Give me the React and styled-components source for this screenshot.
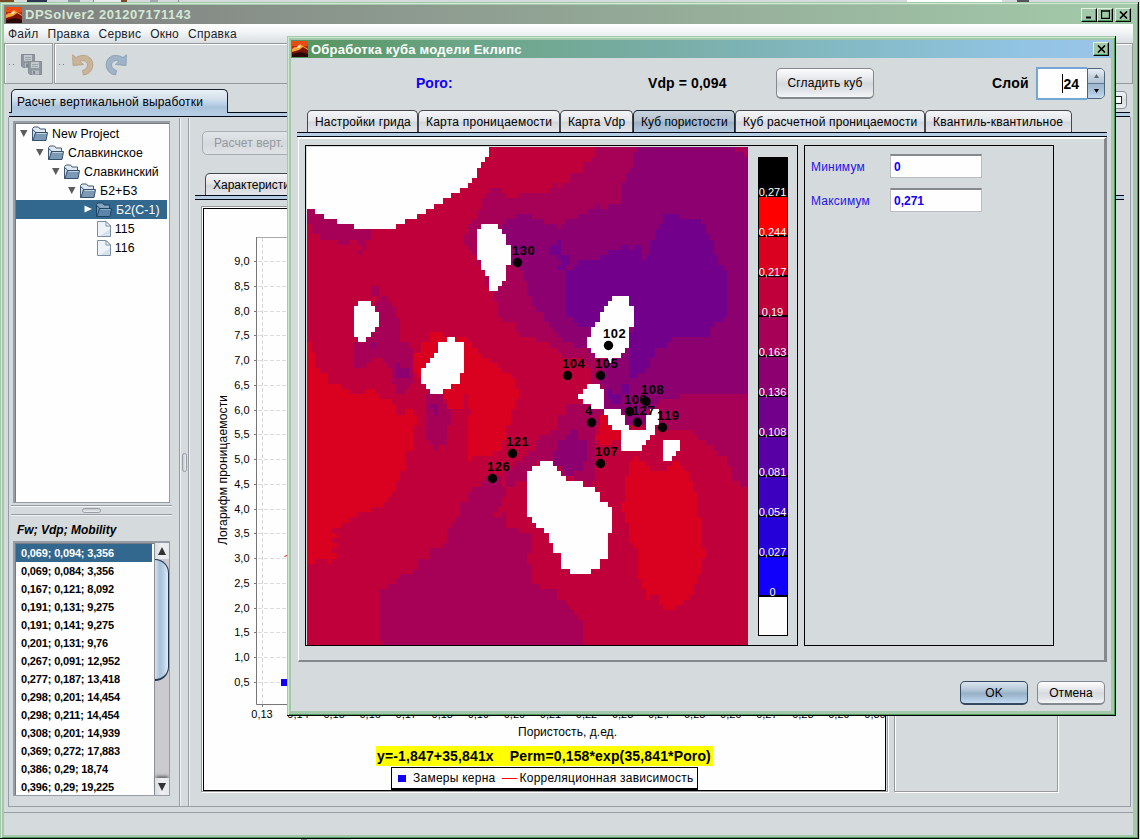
import React from "react";
import styled, { createGlobalStyle, css } from "styled-components";

const Global = createGlobalStyle`
  * { box-sizing: border-box; }
  body { margin: 0; overflow: hidden; background: #d5dadd; }
  #root { font: 12px "Liberation Sans", Arial, sans-serif; color: #000; white-space: pre; }
  svg { display: block; flex: none; }
`;

/* ---------- shared frame parts ---------- */
const Desktop = styled.div`
  position: relative; width: 1140px; height: 840px; padding-top: 2px; overflow: hidden;
  background:
    linear-gradient(90deg, #7a4a22 0 14px, #d5dadd 14px 27px, #2c3550 27px 47px, #d5dadd 47px 68px, #8d959d 68px 80px,
      #d5dadd 80px 93px, #888 93px 94px, #e8eaec 94px 121px, #7a4a22 121px 127px, #d5dadd 127px 150px, #a4a9b4 150px 158px,
      #d5dadd 158px 178px, #888 178px 179px, #d5dadd 179px 907px, #fff 907px 1002px, #d5dadd 1002px 1017px, #555 1017px 1029px, #d5dadd 1029px) 0 0 / 100% 2px no-repeat,
    linear-gradient(90deg, #fff 0 301px, #888 301px 307px, #d5dadd 307px 351px, #fff 351px) 0 839px / 100% 1px no-repeat,
    #d5dadd;
`;
const frame = css`
  background: #a4c8aa;
  border-right: 1px solid #000;
  border-bottom: 1px solid #000;
  display: flex; flex-direction: column;
`;
const MainWindow = styled.div`
  ${frame}
  width: 1139px; height: 837px;
  padding: 3px 5px 3px 4px;
  box-shadow: inset 1px 1px 0 #a4c8aa, inset 2px 2px 0 #d2ead4, inset -1px -1px 0 #4f9960;
`;
const DialogWindow = styled.div`
  ${frame}
  position: absolute; left: 287px; top: 36px; width: 829px; height: 680px; z-index: 5;
  padding: 4px;
  box-shadow: inset 1px 1px 0 #a4c8aa, inset 2px 2px 0 #cfe8d2, inset -1px -1px 0 #4f9960;
`;
const TitleBar = styled.div`
  display: flex; align-items: center; height: ${(p) => p.$h}px; flex: none;
  font-weight: bold; font-size: 13px; color: ${(p) => p.$fg};
  background: ${(p) => p.$bg};
  padding: 0 2px 0 ${(p) => p.$pl}px;
  b { flex: 1; padding-left: 3px; letter-spacing: ${(p) => p.$ls}px; }
`;
const CaptionButton = styled.div`
  width: 16px; height: 14px; background: #a4c8aa; margin-left: ${(p) => p.$gap || 0}px;
  border: 1px solid; border-color: #e0f2e2 #000 #000 #e0f2e2; box-shadow: inset -1px -1px 0 #4f9960;
  display: flex; align-items: center; justify-content: center;
`;
const CloseGlyph = () => (
  <svg width="9" height="8" viewBox="0 0 9 8"><path d="M1 .5L8 7.5M8 .5L1 7.5" stroke="#000" strokeWidth="1.6" /></svg>
);
const AppLogo = () => (
  <svg width="16" height="16" viewBox="0 0 16 16">
    <rect width="16" height="16" fill="#c92a08" />
    <rect width="16" height="5" fill="#e84a10" />
    <path d="M0 8L3 6L5 7L8 3L11 5L16 8V10L0 11Z" fill="#f9a33a" />
    <path d="M4 7L7 4L9 5L7 7Z" fill="#ffe9a0" />
    <path d="M0 11L7 9L11 6L16 9V16H0Z" fill="#7c1407" />
    <path d="M0 13L9 11L16 13V16H0Z" fill="#2a0806" />
  </svg>
);
const Client = styled.div`
  flex: 1; min-height: 0; background: #d5dadd; display: flex; flex-direction: column;
`;

/* ---------- menu and tool bar ---------- */
const MenuBar = styled.div`
  height: 19px; display: flex; gap: 9px; padding: 0 4px; align-items: center; flex: none;
  background: linear-gradient(#fff, #f1f4f5 45%, #d9dee1); color: #20242a; letter-spacing: .25px;
`;
const ToolBar = styled.div` display: flex; height: 41px; gap: 1px; flex: none; `;
const ToolGroup = styled.div`
  width: ${(p) => (p.$w ? p.$w + "px" : "auto")}; flex: ${(p) => (p.$w ? "none" : 1)};
  border: 1px solid #98999d; box-shadow: inset 1px 1px 0 #fff;
  display: flex; align-items: center; padding-left: 4px; padding-top: 2px;
`;
const Grip = styled.span`
  width: 6px; height: 1px; margin-right: ${(p) => p.$gap}px;
  background: linear-gradient(90deg, #777 0 1px, transparent 1px 4px, #777 4px 5px, transparent 5px);
`;
const ToolIcons = styled.div` display: flex; gap: 11px; `;
const SaveAllIcon = () => (
  <svg width="23" height="22" viewBox="0 0 23 22">
    {[[1, 0], [8, 7]].map(([x, y]) => (
      <g key={x} transform={`translate(${x} ${y})`}>
        <path d="M.5 .5H13.5V13.5H2L.5 12Z" fill="#8f979f" stroke="#838b94" />
        <rect x="3" y="1" width="8" height="6" fill="#c3cacf" />
        <path d="M4 3.5H10M4 5.5H10" stroke="#9da4ab" />
        <rect x="4" y="9.500" width="7" height="4" fill="#b6bdc3" />
        <rect x="5" y="10" width="2" height="3" fill="#7e868e" />
      </g>
    ))}
  </svg>
);
const TurnIcon = ({ flip, fill, stroke }) => (
  <svg width="22" height="22" viewBox="0 0 22 22">
    <g transform={flip ? "translate(22 0) scale(-1 1)" : undefined}>
      <path d="M.7 .8L4 3.600C9 .5 15 .8 18 4C23 9 21 17 15 20L11.500 21L10.500 16.500C15 15.500 17.500 10 13.500 7.500C11.500 6 9.500 6.500 8 7.500L11.500 10.500L1 11.500Z"
        fill={fill} stroke={stroke} />
    </g>
  </svg>
);

/* ---------- tabs ---------- */
const TabRow = styled.div`
  display: flex; height: ${(p) => p.$h}px; padding-left: ${(p) => p.$pl}px; position: relative; z-index: 1; flex: none;
`;
const Tab = styled.div`
  width: ${(p) => p.$w}px; height: 100%; flex: none; padding-left: ${(p) => p.$pad || 7}px; line-height: ${(p) => p.$lh || 22}px;
  border: 1px solid ${(p) => (p.$tone === "plain" ? "#43474e" : "#16202e")}; border-bottom: 0;
  border-radius: 5px 5px 0 0; letter-spacing: ${(p) => p.$ls || 0}px; overflow: hidden;
  margin-bottom: ${(p) => (p.$tone === "plain" ? 0 : -1)}px;
  background: ${(p) =>
    p.$tone === "active"
      ? "linear-gradient(#eaf0f6, #d3e0ed 40%, #c5d8ec 50%, #a9c3dc 75%, #b5cde2)"
      : p.$tone === "pressed"
      ? "linear-gradient(#cad4de, #b4c2d0 48%, #9db1c4 52%, #b2c8de)"
      : "linear-gradient(#f4f5f7, #e3e5e9 48%, #d3d6db 52%, #e4e6ea)"};
`;
const TabHolder = styled.div` padding-top: 5px; display: flex; margin-bottom: -1px; height: 29px; `;
const MaxSlot = styled.div` flex: 1; display: flex; padding-top: 5px; `;
const TabStrip = styled.div`
  height: 5px; flex: none; background: #b5cde2; border-top: 1px solid #000818; border-bottom: 1px solid #000818;
  margin: 0 ${(p) => p.$mr || 0}px 0 ${(p) => p.$ml || 0}px;
`;
const MaxButton = styled.div`
  margin: 2px 6px 0 auto; width: 20px; height: 18px; border: 1px solid #8b9098; border-radius: 4px;
  background: linear-gradient(#f2f3f5, #d9dce0 50%, #eceef0); display: flex; align-items: center; justify-content: center;
  i { width: 9px; height: 8px; border: 1px solid #222; background: #fff; }
`;

/* ---------- main layout ---------- */
const Workspace = styled.div`
  margin: 0 2px 0 4px; height: 690px; display: flex; border: 1px solid #989ca6; border-top: 0; flex: none;
`;
const LeftPane = styled.div` width: 170px; padding: 4px 0 0 4px; display: flex; flex-direction: column; flex: none; `;
const VSplit = styled.div`
  width: 10px; margin-top: 1px; border: solid #989ca6; border-width: 0 1px; box-shadow: inset 1px 0 0 #eef0f1, 1px 0 0 #eef0f1;
  display: flex; align-items: center; justify-content: center; flex: none;
`;
const HSplit = styled.div`
  height: 10px; width: 161px; margin: 2px 0 0 -2px; border: solid #989ca6; border-width: 1px 0; flex: none;
  box-shadow: inset 0 1px 0 #f4f5f6, 0 1px 0 #eef0f1; display: flex; align-items: center; justify-content: center;
`;
const Knob = styled.i`
  width: ${(p) => (p.$v ? 5 : 19)}px; height: ${(p) => (p.$v ? 19 : 5)}px; border: 1px solid #9a9da6; border-radius: 3px;
  background: linear-gradient(${(p) => (p.$v ? "90deg" : "180deg")}, #c4c6cc, #eceef1);
`;
const Sunken = styled.div`
  width: 157px; height: ${(p) => p.$h}px; border: 1px solid #989ca6; border-width: 2px 1px 1px 2px; background: #fefefe; flex: none;
  box-shadow: inset 1px 1px 0 #777b82;
`;
const TreeBox = styled(Sunken)` padding: 1px 1px 0 1px; `;
const TreeRow = styled.div`
  height: 19px; display: flex; align-items: center; padding-left: ${(p) => p.$d * 16 + 4}px; font-size: 12.3px;
  margin-right: 1px; letter-spacing: .1px; line-height: 19px;
  ${(p) => p.$on && "background: #33688e; color: #fff;"}
  svg { margin-right: 4px; }
  span { padding-top: 2px; }
`;
const Caret = ({ open }) => (
  <svg width="8" height="9" viewBox="0 0 8 9">
    <path d={open ? "M0 1H7.500L3.750 8Z" : "M.5 .5V7.500L8 4Z"} fill={open ? "#5c5c5c" : "#fff"} />
  </svg>
);
const Folder = ({ dark }) => (
  <svg width="16" height="16" viewBox="0 0 16 16">
    <path d="M.5 14.500V2.500L2 1H6.500L8 3H13.500V7" fill={dark ? "#86a5c0" : "#e0e9f1"} stroke={dark ? "#1c4566" : "#3f5a74"} />
    <path d="M.5 14.500V3.500L3.500 6V14.500Z" fill={dark ? "#6f93b3" : "#cddae6"} stroke={dark ? "#1c4566" : "#3f5a74"} />
    <path d="M1 14.500L3.500 6.500H15.500L14 14.500Z" fill={dark ? "#5c85a9" : "#7c9ab5"} stroke={dark ? "#1c4566" : "#34506b"} />
    <path d="M4.500 7.500H14.500" stroke={dark ? "#86a7c3" : "#c2d2e0"} />
  </svg>
);
const FileIcon = () => (
  <svg width="14" height="16" viewBox="0 0 14 16">
    <path d="M.5 .5H9L13.500 5V15.500H.5Z" fill="#edf3f9" stroke="#7b8da3" />
    <path d="M9 .5V5H13.500Z" fill="#fff" stroke="#7b8da3" />
    <path d="M3 15L13 8V15Z" fill="#d5e1ed" />
  </svg>
);
const Caption = styled.div`
  height: 26px; padding: 7px 0 0 4px; font: italic bold 12px/16px "Liberation Sans", Arial, sans-serif; flex: none;
`;
const ListBox = styled(Sunken)` display: flex; overflow: hidden; `;
const ListRows = styled.div` width: 139px; padding: 1px 2px 0 1px; font-weight: bold; font-size: 11px; letter-spacing: -.16px; `;
const ListRow = styled.div`
  height: 18px; line-height: 18px; padding-left: 5px; overflow: hidden;
  ${(p) => p.$on && "background: #33688e; color: #fff;"}
`;
const ScrollBar = styled.div`
  width: 15px; display: flex; flex-direction: column; border-left: 1px solid #8b9098; background: #cbcbcf;
`;
const ScrollCap = styled.div`
  height: ${(p) => p.$h}px; background: linear-gradient(90deg, #d9dde1, #eef0f2 50%, #e4e8ec);
  display: flex; align-items: center; justify-content: center; flex: none;
  ${(p) => p.$end && "box-shadow: 0 -3px 3px -1px #666;"}
`;
const Thumb = styled.div`
  height: 122px; border: 1px solid #22354d; border-width: 1px 1px 2px 0; border-radius: 0 14px 14px 0; flex: none; margin-bottom: auto;
  background: linear-gradient(90deg, #d4e2f0, #a9c1d9 35%, #b4cbe0 60%, #dcebf8);
`;

const RightPane = styled.div` flex: 1; display: flex; flex-direction: column; padding: 14px 6px 0 6px; min-width: 0; `;
const buttonLook = {
  plain: ["#85898f", "linear-gradient(#fdfdfd, #e9ebee 30%, #d6dadf 52%, #dfe2e6 75%, #f4f6f8)"],
  primary: ["#34495f", "linear-gradient(#dbe5ef, #b6c9da 35%, #98b1c7 55%, #a8c2da 75%, #c3dcf2)"],
  off: ["#a9adb3", "linear-gradient(#e2e5e8, #d5d9dd 55%, #dfe2e5)"],
};
const Button = styled.div`
  width: ${(p) => p.$w}px; height: ${(p) => p.$h}px; border: 1px solid ${(p) => buttonLook[p.$kind || "plain"][0]};
  border-bottom-width: ${(p) => (p.$kind === "off" ? 1 : 2)}px;
  border-radius: 5px; background: ${(p) => buttonLook[p.$kind || "plain"][1]}; letter-spacing: .1px;
  display: flex; align-items: center; justify-content: center; flex: none;
  ${(p) => p.$kind === "off" && "color: #94989d; justify-content: flex-start; padding-left: 11px; margin: 0 0 18px 7px;"}
`;
const PanelRow = styled.div` display: flex; gap: 6px; padding: 6px 0 0 6px; `;
const EtchedPanel = styled.div`
  width: ${(p) => p.$w}px; height: 586px; border: 1px solid #98999d; flex: none;
  box-shadow: 1px 1px 0 #fff, inset 1px 1px 0 #fff; padding: ${(p) => p.$pad || "0"};
`;
const ChartCard = styled.div`
  height: 583px; border: 1px solid #000; background: #fefefe; display: flex; flex-direction: column; align-items: center;
`;
const Formula = styled.div`
  width: 337px; height: 20px; background: #ff0; font: bold 14px/21px "Liberation Sans", Arial, sans-serif; text-align: center;
  margin-right: 1px; letter-spacing: .14px;
`;
const ChartLegend = styled.div`
  width: 307px; height: 24px; margin-top: 1px; border: 1px solid #000; border-bottom-width: 2px; display: flex; align-items: center; padding-left: 6px;
  letter-spacing: .25px;
  i { width: 8px; height: 7px; background: #1200f5; margin-right: 7px; }
  u { width: 15px; height: 1px; background: #f00; margin: 0 3px 0 6px; }
`;
const StatusBar = styled.div` margin-top: 5px; border-top: 1px solid #989ca6; flex: 1; `;

const yTicks = Array.from({ length: 18 }, (_, i) => ((18 - i) / 2).toFixed(1).replace(".", ","));
const xTicks = Array.from({ length: 18 }, (_, i) => "0," + (13 + i));

const Plot = () => (
  <svg width="681" height="537" viewBox="204 209 681 537" fontFamily="Liberation Sans, Arial, sans-serif">
    <path d="M256.500 237.500H880" stroke="#aaa" />
    <path d="M262.500 238V704" stroke="#d6d6d6" strokeDasharray="4 2" />
    {yTicks.map((t, i) => {
      const y = Math.round(261 + i * 24.76) + 0.5;
      return (
        <g key={t}>
          <path d={`M258 ${y}H300`} stroke="#dcdcdc" strokeDasharray="4 2" />
          <path d={`M254 ${y}H257`} stroke="#777" />
          <text x="249.500" y={y + 3.5} textAnchor="end" fontSize="11">{t}</text>
        </g>
      );
    })}
    <path d="M256.500 237V704.500H880M262.500 704V707" stroke="#777" fill="none" />
    <path d="M284.500 556.500L287 555.500" stroke="#f00" />
    <rect x="281" y="679" width="7" height="7" fill="#1200f5" />
    {xTicks.map((t, i) => (
      <text key={t} x={262 + i * 36.06} y="718" textAnchor="middle" fontSize="11">{t}</text>
    ))}
    <text transform="translate(227 545) rotate(-90)" fontSize="12" textLength="150">Логарифм проницаемости</text>
    <text x="518" y="736" fontSize="12" textLength="99">Пористость, д.ед.</text>
  </svg>
);

/* ---------- porosity map ---------- */
const COLORS = { r: "#d90020", c: "#bf003a", m: "#a60057", p: "#8c0070", v: "#73008b", w: "#fefefe" };
// Zones are listed from back to front: [colour, x shift, y shift, outline], in thirds of a pixel.
const ZONES = [
  ["m", 0, 0, "21,203 60,219 110,240 155,255 207,270 207,300 195,312 195,325 183,328 183,345 168,345 168,328 183,322 180,310 168,303 145,297 145,310 120,310 108,300 95,310 93,297 57,295 45,280 33,278 33,252 21,250"],
  ["m", 0, 0, "207,452 220,435 243,435 243,465 257,470 257,482 283,500 283,527 295,530 306,545 306,605 333,620 333,725 320,740 318,757 295,757 283,740 270,725 270,692 257,680 257,665 243,653 218,653 218,665 195,668 195,682 170,682 156,665 156,600 200,600 232,560 232,512 218,495 232,482 232,468 207,465"],
  ["m", 0, 0, "882,21 882,50 857,68 845,95 815,100 808,125 795,130 780,143 765,130 755,143 745,158 675,160 672,172 658,160 658,172 630,172 607,160 594,143 570,145 570,158 556,160 543,185 543,205 530,220 519,250 507,262 507,283 497,285 497,310 507,312 507,325 519,330 531,360 543,390 556,405 556,435 570,450 583,455 583,485 594,495 594,515 607,540 645,545 645,575 658,590 705,590 705,603 742,605 742,620 765,622 772,640 790,650 845,655 858,680 868,685 868,730 855,735 845,792 795,800 795,815 770,825 770,870 732,885 720,900 705,915 705,927 682,930 672,950 648,965 645,975 632,990 618,1005 618,1035 645,1035 648,1025 685,1020 685,995 720,960 770,960 790,1010 845,1023 870,1035 882,1015 882,930 892,870 892,850 907,820 960,830 960,860 1050,860 1075,870 1180,870 1180,885 1205,900 1230,915 1255,930 1255,945 1280,948 1280,980 1295,985 1295,1020 1315,1025 1330,1038 1344,1053 1344,21"],
  ["m", 0, 0, "560,1010 605,1010 607,1035 618,1040 618,1065 595,1070 605,1085 595,1110 583,1120 595,1140 605,1115 618,1115 618,1160 645,1162 658,1175 690,1178 694,1235 682,1240 682,1265 694,1270 694,1318 720,1345 735,1360 740,1348 765,1350 770,1375 792,1378 792,1392 820,1410 830,1435 842,1440 842,1518 258,1518 243,1500 243,1435 232,1430 232,1380 243,1375 243,1350 258,1345 283,1330 283,1317 306,1313 306,1300 333,1297 333,1285 345,1283 357,1268 357,1255 382,1253 395,1238 395,1223 420,1220 432,1205 445,1190 445,1162 457,1145 470,1130 480,1125 480,1085 507,1080 507,1055 520,1050 520,1037 545,1035"],
  ["p", 0, 0, "1017,21 1005,38 1005,65 993,80 982,95 970,98 970,120 960,158 958,185 930,190 930,203 895,205 890,190 882,203 857,207 855,220 832,222 832,235 793,238 793,250 780,255 778,265 768,265 765,252 732,250 732,238 695,235 693,222 645,220 645,235 618,237 618,250 605,252 605,270 618,285 620,315 630,320 630,375 655,380 672,390 672,420 682,422 682,465 695,470 695,485 708,500 720,515 732,517 732,530 745,545 755,560 768,575 780,590 795,605 820,605 820,620 855,620 880,650 925,660 910,690 925,700 905,720 907,805 965,810 980,850 1045,850 1045,810 1070,795 1092,775 1145,775 1145,760 1344,758 1344,52 1330,50 1330,38 1305,35 1305,21"],
  ["p", 0, 0, "283,670 306,670 306,683 332,685 332,700 318,712 295,712 283,695"],
  ["p", 0, 0, "207,605 219,605 219,622 207,622"],
  ["p", 660, 720, "148,148 172,148 172,165 195,185 195,240 185,243 185,270 160,273 158,287 135,287 130,273 105,255 97,240 97,228 108,215 108,180 133,178 135,165 148,163"],
  ["c", 660, 0, "195,683 208,683 208,713 195,713"],
  ["v", 660, 0, "432,220 483,220 483,237 532,238 545,250 558,268 570,297 582,300 582,345 595,348 595,375 608,378 608,390 622,392 622,525 608,530 595,548 570,562 570,577 558,590 460,592 460,605 445,608 445,620 408,622 408,652 395,655 395,668 383,685 370,697 357,700 357,713 322,713 322,600 345,560 220,560 172,558 172,545 145,530 133,525 133,392 158,390 158,375 172,373 172,360 235,360 235,347 258,345 258,330 298,328 298,313 333,313 333,327 345,327 345,312 370,312 370,360 383,360 383,347 397,345 397,298 408,297 408,268 420,265 420,250 432,248"],
  ["v", 660, 0, "108,298 120,298 120,343 147,347 147,375 133,388 108,388 108,375 120,372 120,360 97,345 85,343 85,315 108,312"],
  ["v", 660, 720, "258,40 270,25 283,25 283,38 298,38 298,10 322,10 322,38 308,40 308,70 283,70 283,55 258,55"],
  ["v", 0, 0, "655,312 672,312 672,325 655,325"],
  ["r", 0, 0, "21,605 33,605 33,635 45,637 45,680 57,685 57,698 82,700 82,730 120,732 120,745 145,745 145,758 195,758 195,745 220,745 220,758 243,760 243,775 270,778 270,790 283,792 283,808 295,820 318,820 318,808 345,810 345,822 357,825 357,850 345,855 345,885 333,888 333,927 318,930 318,958 308,960 308,990 295,995 295,1020 283,1025 283,1050 270,1055 270,1067 258,1070 258,1082 245,1085 245,1100 208,1102 208,1115 168,1117 168,1130 145,1132 145,1145 120,1148 120,1160 93,1163 93,1175 108,1177 108,1190 93,1193 93,1207 108,1210 108,1223 93,1225 93,1240 108,1240 108,1253 93,1255 93,1268 82,1268 82,1255 45,1255 45,1268 21,1268"],
  ["r", 0, 0, "395,577 432,577 432,590 505,593 507,605 520,608 520,622 543,638 543,650 570,653 570,665 607,682 607,697 632,700 632,712 645,715 645,740 668,745 657,760 657,770 645,788 645,805 632,822 632,850 618,855 618,900 607,903 607,927 583,930 583,943 520,945 520,958 507,958 507,822 520,815 507,805 507,760 495,757 495,792 482,805 445,805 432,770 432,740 382,725 345,705 345,640 357,635 370,622 370,608 382,605 395,592"],
  ["m", 0, 720, "382,38 420,20 420,45 432,50 432,65 445,90 457,105 457,130 443,135 443,192 420,195 407,208 395,192 382,180"],
  ["p", 0, 720, "395,70 420,70 420,102 405,102 405,87 395,87"],
  ["r", 660, 720, "322,240 345,240 345,228 357,228 357,240 383,240 383,255 397,258 397,272 445,272 445,258 457,255 457,240 483,242 483,257 497,260 497,273 508,275 508,300 520,303 520,330 532,335 532,410 545,415 545,500 557,505 557,530 545,535 545,575 532,580 532,605 520,610 520,640 497,658 497,670 472,672 472,687 432,687 432,672 420,670 420,643 397,643 397,655 383,655 383,628 370,625 370,600 357,598 357,505 345,500 345,490 333,487 333,460 322,455 322,425 310,420 310,392 298,392 298,365 310,363 310,290 322,285"],
  ["r", 660, 720, "235,105 258,105 270,130 283,145 300,148 300,175 280,180 270,195 245,195 245,180 232,180"],
  ["w", 0, 0, "0,0 570,0 570,51 555,51 555,66 543,66 543,81 531,81 531,111 519,111 519,129 507,129 507,144 480,144 480,159 456,159 456,174 432,174 432,189 405,189 405,204 381,204 381,219 357,219 357,237 318,237 318,251 282,251 282,267 156,267 156,251 108,251 108,237 69,237 69,219 45,219 45,204 0,204"],
  ["w", 0, 0, "543,252 594,252 594,267 607,267 607,283 618,283 618,312 630,312 630,375 618,375 618,420 607,420 607,435 594,435 594,453 570,453 570,405 556,405 556,390 543,390 543,360 531,360 531,267 543,267"],
  ["w", 0, 0, "168,483 207,483 207,498 220,498 220,513 232,513 232,560 220,560 220,575 207,575 207,590 195,590 195,605 168,605 168,590 156,590 156,498 168,498"],
  ["w", 0, 0, "445,591 468,591 468,605 495,605 495,698 480,698 480,728 457,728 457,743 432,743 432,758 393,758 393,743 382,743 382,728 370,728 370,683 382,683 382,668 395,668 395,652 407,652 407,637 420,637 420,605 445,605"],
  ["w", 660, 0, "283,468 322,468 322,483 333,483 333,498 345,498 345,560 333,560 333,590 322,590 322,620 310,620 310,637 298,637 298,652 283,652 283,665 258,665 258,652 222,652 222,637 207,637 207,622 195,622 195,592 207,592 207,562 222,562 222,545 235,545 235,513 247,513 247,498 258,498 258,483 283,483"],
  ["w", 660, 0, "195,730 235,730 235,743 247,743 247,805 208,805 208,790 183,790 183,775 172,775 172,758 183,758 183,743 195,743"],
  ["w", 660, 720, "247,87 298,87 298,102 310,102 310,132 322,132 322,148 385,148 385,100 397,87 420,87 420,130 408,135 408,163 397,165 397,180 383,182 383,195 370,195 370,210 298,210 298,148 283,148 283,132 270,132 270,117 258,117 258,102 247,102"],
  ["w", 660, 720, "432,180 483,180 483,210 472,210 472,225 458,225 458,240 432,240"],
  ["w", 660, 720, "57,240 97,240 97,255 108,255 108,272 120,272 120,288 133,288 133,303 183,303 183,318 222,318 222,333 245,333 245,363 270,363 270,380 282,380 282,457 270,457 270,503 258,503 258,533 245,533 245,548 235,548 235,563 208,563 208,578 147,578 147,563 120,563 120,520 97,517 97,487 85,487 85,457 72,457 72,442 45,442 45,425 33,425 33,410 21,410 21,272 33,272 33,255 57,255"],
];
const COLS = 104;
const ROWS = 97;
const CW = 441 / COLS;
const CH = 499 / ROWS;

function inside(pts, x, y) {
  let hit = false;
  for (let i = 0, j = pts.length - 1; i < pts.length; j = i++) {
    const [xi, yi] = pts[i];
    const [xj, yj] = pts[j];
    if (yi > y !== yj > y && x < ((xj - xi) * (y - yi)) / (yj - yi) + xi) hit = !hit;
  }
  return hit;
}

// Samples the zones at every grid cell and joins equal neighbours of a row into runs.
function gridPaths() {
  const zones = ZONES.map(([k, dx, dy, s]) => [k, s.split(" ").map((q) => {
    const [a, b] = q.split(",").map(Number);
    return [(a + dx - 21) / 3, (b + dy - 21) / 3];
  })]);
  const out = {};
  for (let r = 0; r < ROWS; r++) {
    let start = 0;
    let prev = null;
    for (let c = 0; c <= COLS; c++) {
      let k = null;
      if (c < COLS) {
        k = "c";
        for (const [key, pts] of zones) if (inside(pts, (c + 0.5) * CW, (r + 0.5) * CH)) k = key;
      }
      if (k !== prev) {
        if (prev) {
          const [x0, x1, y0, y1] = [start * CW, c * CW, r * CH, (r + 1) * CH].map(Math.round);
          out[prev] = (out[prev] || "") + `M${x0} ${y0}H${x1}V${y1}H${x0}Z`;
        }
        prev = k;
        start = c;
      }
    }
  }
  return out;
}
const PATHS = gridPaths();

const WELLS = [
  ["130", 512, 255, 517.5, 262.5], ["102", 603, 338, 608.5, 345.5], ["104", 562, 368, 567.5, 375.5], ["105", 595, 368, 600.5, 375.5],
  ["108", 641, 394, 646, 401.5], ["106", 624, 404, 629.5, 411.5], ["127", 632, 415, 637.5, 422.5], ["119", 657, 420, 662.5, 427.5],
  ["4", 585, 415, 591.5, 422.5], ["107", 595, 456, 600.5, 463.5], ["121", 506, 446, 512.5, 453.5], ["126", 487, 471, 492.5, 478.5],
];
const PorosityMap = () => (
  <svg width="441" height="499" viewBox="307 147 441 499" shapeRendering="crispEdges" fontFamily="Liberation Sans, Arial, sans-serif">
    <rect x="307" y="147" width="441" height="499" fill={COLORS.c} />
    <g transform="translate(307 147)">
      {Object.entries(PATHS).map(([k, d]) => <path key={k} d={d} fill={COLORS[k]} />)}
    </g>
    {WELLS.map(([n, tx, ty, x, y]) => (
      <g key={n}>
        <circle cx={x} cy={y} r="4.700" shapeRendering="auto" />
        <text x={tx} y={ty} fontSize="13" fontWeight="bold" letterSpacing=".5">{n}</text>
      </g>
    ))}
  </svg>
);

const SCALE = [
  ["#000", "0,271"], ["#f00", "0,244"], ["#d90020", "0,217"], ["#bf003a", "0,19"], ["#a60057", "0,163"], ["#8c0070", "0,136"],
  ["#73008b", "0,108"], ["#5800a6", "0,081"], ["#3e00bf", "0,054"], ["#2500d9", "0,027"], ["#1000fb", "0"], ["#fefefe", ""],
];
const Scale = styled.div` width: 30px; height: 479px; margin: 10px 0 0 10px; border: 1px solid #000; flex: none; `;
const ScaleCell = styled.div`
  height: 40px; background: ${(p) => p.$c}; border-bottom: ${(p) => (p.$last ? 0 : 2)}px solid #000; color: #fff; font-size: 11px;
  display: flex; justify-content: center; align-items: flex-end; line-height: 11px; padding-right: 1px;
  &:first-child { height: 39px; border-bottom-width: 0; }
  &:last-child { height: 38px; }
  span { margin-bottom: -3px; position: relative; }
  &:first-child span { margin-bottom: -1px; }
`;

/* ---------- dialog ---------- */
const HeaderRow = styled.div`
  height: 51px; margin-bottom: 1px; display: flex; align-items: center; padding-left: 125px; flex: none; font: bold 14px "Liberation Sans", Arial, sans-serif;
`;
const HeaderLabel = styled.div` width: ${(p) => p.$w}px; color: ${(p) => p.$c || "#000"}; flex: none; letter-spacing: ${(p) => p.$ls || 0}px; padding-bottom: 1px; `;
const ButtonSlot = styled.div` font: 12px "Liberation Sans", Arial, sans-serif; width: 216px; `;
const Spinner = styled.div` display: flex; height: 33px; align-items: center; `;
const SpinnerField = styled.div`
  width: 51px; height: 33px; border: 2px solid #74a5d5; border-right: 0; background: #fefefe; display: flex; align-items: center; justify-content: flex-end; padding-right: 8px;
  &::before { content: ""; width: 1px; height: 19px; background: #000; }
`;
const SpinnerKeys = styled.div`
  width: 18px; height: 31px; border: 1px solid #4c637b; border-radius: 0 5px 5px 0; overflow: hidden;
`;
const SpinnerKey = styled.div`
  height: ${(p) => (p.$down ? 15 : 14)}px; display: flex; align-items: center; justify-content: center;
  ${(p) => p.$down && "border-top: 1px solid #5d7894;"}
  background: ${(p) => (p.$down ? "linear-gradient(#9fb8cf, #a9c3db 50%, #c4daee)" : "linear-gradient(#e6eef5, #c2d1df 60%, #b2c5d6)")};
`;
const DialogPanel = styled.div`
  margin: 0 4px 0 7px; height: 525px; border: 2px solid; border-color: #fff #85898d #85898d #fff; border-width: 2px 3px 2px 1px;
  display: flex; gap: 6px; padding: 6px 0 0 6px; flex: none;
`;
const MapPanel = styled.div` width: 493px; height: 501px; border: 1px solid #000; display: flex; padding: 1px 0 0 1px; overflow: hidden; `;
const FormPanel = styled.div` width: 250px; height: 501px; border: 1px solid #000; padding: 8px 0 0 6px; `;
const Field = styled.label`
  display: flex; align-items: center; height: 24px; margin-bottom: 10px; color: #2613ea;
  span { width: 79px; letter-spacing: .2px; padding-top: 1px; }
  b { width: 92px; height: 24px; background: #fefefe; border: 1px solid #b9bcc0; border-top: 2px solid #85888d; line-height: 22px; padding-left: 3px; color: #1200f5; }
`;
const DialogButtons = styled.div` display: flex; justify-content: flex-end; gap: 9px; padding: 19px 6px 0 0; `;

const TREE = [
  ["New Project", 0, "open"], ["Славкинское", 1, "open"], ["Славкинский", 2, "open"], ["Б2+Б3", 3, "open"],
  ["Б2(С-1)", 4, "closed"], ["115", 4.8, "file"], ["116", 4.8, "file"],
];
const ROWS_TEXT = [
  "0,069; 0,094; 3,356", "0,069; 0,084; 3,356", "0,167; 0,121; 8,092", "0,191; 0,131; 9,275", "0,191; 0,141; 9,275",
  "0,201; 0,131; 9,76", "0,267; 0,091; 12,952", "0,277; 0,187; 13,418", "0,298; 0,201; 14,454", "0,298; 0,211; 14,454",
  "0,308; 0,201; 14,939", "0,369; 0,272; 17,883", "0,386; 0,29; 18,74", "0,396; 0,29; 19,225",
];
const TABS = [
  ["Настройки грида", 111, 0.15], ["Карта проницаемости", 142, 0.22], ["Карта Vdp", 73, 0.05],
  ["Куб пористости", 102, 0.05, "pressed"], ["Куб расчетной проницаемости", 190, 0.15], ["Квантиль-квантильное", 147, 0.2],
];

function Dialog() {
  return (
    <DialogWindow>
      <TitleBar $h={18} $pl={1} $fg="#fff" $ls={0.22} $bg="linear-gradient(90deg, #55935c, #6aa585 20%, #78ada6 45%, #85bbc8 70%, #92c4e4 90%, #9cc4ea)">
        <AppLogo /><b>Обработка куба модели Еклипс</b>
        <CaptionButton><CloseGlyph /></CaptionButton>
      </TitleBar>
      <Client>
        <HeaderRow>
          <HeaderLabel $w={232} $c="#1200f5">Poro:</HeaderLabel>
          <HeaderLabel $w={128} $ls={0.1}>Vdp = 0,094</HeaderLabel>
          <ButtonSlot><Button $w={98} $h={31}>Сгладить куб</Button></ButtonSlot>
          <HeaderLabel $w={44} $ls={0.2}>Слой</HeaderLabel>
          <Spinner>
            <SpinnerField>24</SpinnerField>
            <SpinnerKeys>
              <SpinnerKey><svg width="5" height="4"><path d="M0 4L2.500 0L5 4Z" fill="#666" /></svg></SpinnerKey>
              <SpinnerKey $down><svg width="5" height="4"><path d="M0 0L2.500 4L5 0Z" fill="#000" /></svg></SpinnerKey>
            </SpinnerKeys>
          </Spinner>
        </HeaderRow>
        <TabRow $h={22} $pl={16}>
          {TABS.map(([t, w, ls, tone]) => <Tab key={t} $w={w} $ls={ls} $tone={tone || "plain"}>{t}</Tab>)}
        </TabRow>
        <TabStrip $ml={6} $mr={4} />
        <DialogPanel>
          <MapPanel>
            <PorosityMap />
            <Scale>
              {SCALE.map(([c, t], i) => <ScaleCell key={c} $c={c} $last={i === SCALE.length - 1}><span>{t}</span></ScaleCell>)}
            </Scale>
          </MapPanel>
          <FormPanel>
            <Field><span>Минимум</span><b>0</b></Field>
            <Field><span>Максимум</span><b>0,271</b></Field>
          </FormPanel>
        </DialogPanel>
        <DialogButtons>
          <Button $w={68} $h={24} $kind="primary">OK</Button>
          <Button $w={68} $h={24}>Отмена</Button>
        </DialogButtons>
      </Client>
    </DialogWindow>
  );
}

export default function App() {
  return (
    <Desktop>
      <Global />
      <MainWindow>
        <TitleBar $h={19} $pl={2} $fg="#d4e8d5" $ls={0.53} $bg="linear-gradient(90deg, #808080, #a0c4a6 92%, #a4c8aa)">
          <AppLogo /><b>DPSolver2 201207171143</b>
          <CaptionButton><svg width="9" height="8"><path d="M1 6.500H6" stroke="#000" strokeWidth="2" /></svg></CaptionButton>
          <CaptionButton><svg width="9" height="9"><path d="M0 1H9M.5 0V8.500H8.500V0" stroke="#000" strokeWidth="1.300" fill="none" /></svg></CaptionButton>
          <CaptionButton $gap={2}><CloseGlyph /></CaptionButton>
        </TitleBar>
        <Client>
          <MenuBar>
            <span>Файл</span><span>Правка</span><span>Сервис</span><span>Окно</span><span>Справка</span>
          </MenuBar>
          <ToolBar>
            <ToolGroup $w={49}><Grip $gap={5} /><SaveAllIcon /></ToolGroup>
            <ToolGroup><Grip $gap={7} /><ToolIcons><TurnIcon fill="#c9b49b" stroke="#b9a488" /><TurnIcon flip fill="#9fb4c6" stroke="#8ca2b5" /></ToolIcons></ToolGroup>
          </ToolBar>
          <TabRow $h={28} $pl={7}>
            <TabHolder><Tab $w={217} $tone="active" $pad={5} $lh={24} $ls={0.18}>Расчет вертикальной выработки</Tab></TabHolder>
            <MaxSlot><MaxButton><i /></MaxButton></MaxSlot>
          </TabRow>
          <TabStrip $ml={5} $mr={3} />
          <Workspace>
            <LeftPane>
              <TreeBox $h={382}>
                {TREE.map(([t, d, kind]) => (
                  <TreeRow key={t} $d={d} $on={kind === "closed"}>
                    {kind === "file" ? <FileIcon /> : <><Caret open={kind === "open"} /><Folder dark={kind === "closed"} /></>}
                    <span>{t}</span>
                  </TreeRow>
                ))}
              </TreeBox>
              <HSplit><Knob /></HSplit>
              <Caption>Fw; Vdp; Mobility</Caption>
              <ListBox $h={255}>
                <ListRows>{ROWS_TEXT.map((t, i) => <ListRow key={i} $on={i === 0}>{t}</ListRow>)}</ListRows>
                <ScrollBar>
                  <ScrollCap $h={16}><svg width="8" height="8"><path d="M0 8L4 0L8 8Z" fill="#333" /></svg></ScrollCap>
                  <Thumb />
                  <ScrollCap $h={17} $end><svg width="8" height="8"><path d="M0 0L4 8L8 0Z" fill="#333" /></svg></ScrollCap>
                </ScrollBar>
              </ListBox>
            </LeftPane>
            <VSplit><Knob $v /></VSplit>
            <RightPane>
              <Button $w={120} $h={24} $kind="off">Расчет верт. выр.</Button>
              <TabRow $h={22} $pl={10}><Tab $w={110} $tone="plain">Характеристика</Tab></TabRow>
              <TabStrip />
              <PanelRow>
                <EtchedPanel $w={687} $pad="1px"><ChartCard>
                  <Plot />
                  <Formula>{"y=-1,847+35,841x    Perm=0,158*exp(35,841*Poro)"}</Formula>
                  <ChartLegend><i />Замеры керна<u />Корреляционная зависимость</ChartLegend>
                </ChartCard></EtchedPanel>
                <EtchedPanel $w={164} />
              </PanelRow>
            </RightPane>
          </Workspace>
          <StatusBar />
        </Client>
      </MainWindow>
      <Dialog />
    </Desktop>
  );
}
